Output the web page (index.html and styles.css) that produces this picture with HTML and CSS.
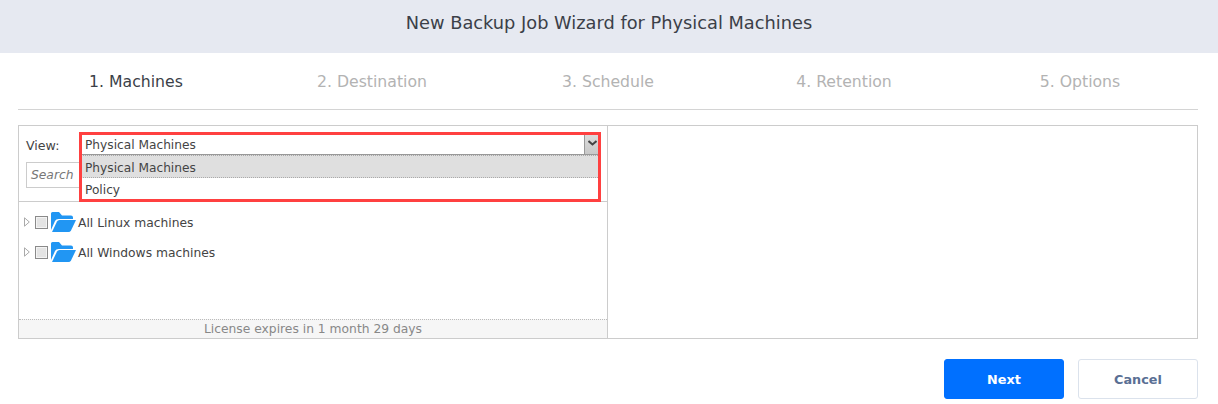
FILE: index.html
```html
<!DOCTYPE html>
<html lang="en">
<head>
<meta charset="utf-8">
<title>New Backup Job Wizard for Physical Machines</title>
<link rel="stylesheet" href="styles.css">
</head>
<body>
<header class="title">New Backup Job Wizard for Physical Machines</header>
<nav class="steps">
  <div class="step active">1. Machines</div>
  <div class="step">2. Destination</div>
  <div class="step">3. Schedule</div>
  <div class="step">4. Retention</div>
  <div class="step">5. Options</div>
</nav>
<main class="panel">
  <section class="left">
    <div class="view-row">
      <span class="view-label">View:</span>
      <div class="select">
        <span class="select-value">Physical Machines</span>
        <span class="select-btn"><svg class="chevron" width="9" height="6" viewBox="0 0 9 6"><path d="M.5 1 4.500 4.500 8.500 1" fill="none" stroke="#444" stroke-width="2"/></svg></span>
      </div>
    </div>
    <div class="search-row"><div class="search">Search</div></div>
    <ul class="tree">
      <li class="node">
        <svg class="arrow" width="6" height="10" viewBox="0 0 6 10"><path d="M.5.8 5.300 5 .5 9.200z" fill="#fff" stroke="#aaa"/></svg>
        <span class="check"></span>
        <svg class="folder" width="25" height="22" viewBox="0 0 25 22"><path d="M0 2.500Q0 1 1.500 1H8l3 3.500h9q2 0 2 2V8H7.500Q5 8 4 10L0 19z" fill="#2196f3"/><path d="M1 21l5-10.500Q6.800 9 8.500 9H25l-5 10.500q-.8 1.500-2.500 1.500z" fill="#2196f3"/></svg>
        <span class="node-label">All Linux machines</span>
      </li>
      <li class="node">
        <svg class="arrow" width="6" height="10" viewBox="0 0 6 10"><path d="M.5.8 5.300 5 .5 9.200z" fill="#fff" stroke="#aaa"/></svg>
        <span class="check"></span>
        <svg class="folder" width="25" height="22" viewBox="0 0 25 22"><path d="M0 2.500Q0 1 1.500 1H8l3 3.500h9q2 0 2 2V8H7.500Q5 8 4 10L0 19z" fill="#2196f3"/><path d="M1 21l5-10.500Q6.800 9 8.500 9H25l-5 10.500q-.8 1.500-2.500 1.500z" fill="#2196f3"/></svg>
        <span class="node-label">All Windows machines</span>
      </li>
    </ul>
    <div class="license">License expires in 1 month 29 days</div>
    <ul class="dropdown">
      <li class="option selected">Physical Machines</li>
      <li class="option">Policy</li>
    </ul>
    <div class="highlight"></div>
  </section>
  <section class="right"></section>
</main>
<footer class="actions">
  <button class="btn primary">Next</button>
  <button class="btn secondary">Cancel</button>
</footer>
</body>
</html>
```

FILE: styles.css
```css
* { box-sizing: border-box; }
html, body { margin: 0; padding: 0; }
body {
  width: 1218px;
  height: 404px;
  overflow: hidden;
  background: #fff;
  color: #444;
  font-family: "DejaVu Sans", sans-serif;
  font-size: 12.3px;
}
.title {
  height: 53px;
  background: #e6e9f1;
  color: #3b3f48;
  font-size: 17.8px;
  line-height: 45px;
  text-align: center;
}
.steps {
  display: grid;
  grid-template-columns: repeat(5, 236px);
  margin: 0 20px 0 18px;
  height: 57px;
  border-bottom: 1px solid #d4d4d4;
}
.step {
  font-size: 15.7px;
  line-height: 58px;
  text-align: center;
  color: #b3b3b3;
}
.step.active { color: #3b3f48; }
.panel {
  display: flex;
  margin: 15px 20px 0 18px;
  height: 214px;
  border: 1px solid #ccc;
}
.left {
  position: relative;
  width: 589px;
  display: flex;
  flex-direction: column;
  border-right: 1px solid #ccc;
}
.right { flex: 1; }
.view-row {
  display: flex;
  align-items: flex-start;
  height: 36px;
  padding: 7px 7px 0 7px;
}
.view-label { width: 54px; line-height: 25px; font-size: 12.6px; }
.select {
  flex: 1;
  height: 22px;
  display: flex;
  align-items: flex-end;
  justify-content: space-between;
  padding-left: 5px;
  border-bottom: 1px solid #999;
}
.select-value { line-height: 17px; font-size: 12.2px; }
.select-btn {
  width: 16px;
  height: 19px;
  background: linear-gradient(#dcdcdc, #c8c8c8);
  border-left: 1px solid #999;
  display: flex;
  align-items: center;
  justify-content: center;
}
.chevron { margin-bottom: 3px; }
.search-row {
  height: 40px;
  padding: 0 7px;
  border-bottom: 1px solid #ccc;
}
.search {
  height: 26px;
  border: 1px solid #ccc;
  padding-left: 4px;
  line-height: 25px;
  font-style: italic;
  color: #777;
}
.tree {
  flex: 1;
  list-style: none;
  margin: 0;
  padding: 5px 0 0 5px;
}
.node {
  display: flex;
  align-items: center;
  height: 30px;
  gap: 4px;
}
.node-label { margin-left: -1px; line-height: 15px; padding-top: 2px; }
.arrow { margin-right: 1px; }
.check {
  width: 13px;
  height: 13px;
  border: 1px solid #8a8a8a;
  background: #e4e4e4;
  box-shadow: inset 0 0 0 1px #f4f4f4;
}
.folder { margin: 0 -1px 0 -1px; }
.license {
  height: 19px;
  background: #f6f6f6;
  border-top: 1px dotted #bbb;
  color: #888;
  line-height: 18px;
  text-align: center;
}
.dropdown {
  position: absolute;
  left: 62px;
  top: 29px;
  width: 517px;
  margin: 0;
  padding: 0;
  list-style: none;
  background: #fff;
}
.option {
  height: 23px;
  line-height: 25px;
  padding-left: 4px;
  font-size: 12.2px;
}
.option.selected {
  background: #dfdfdf;
  border-top: 1px dotted #aaa;
  border-bottom: 1px dotted #aaa;
}
.highlight {
  position: absolute;
  left: 60px;
  top: 6px;
  width: 522px;
  height: 70px;
  border: 3px solid #ff4040;
  pointer-events: none;
}
.actions {
  display: flex;
  justify-content: flex-end;
  gap: 14px;
  margin: 20px 20px 0 18px;
}
.btn {
  width: 120px;
  height: 40px;
  border-radius: 3px;
  font-family: "DejaVu Sans", sans-serif;
  font-size: 12.8px;
  font-weight: 700;
}
.primary { background: #0070ff; border: 1px solid #0070ff; color: #fff; }
.secondary { background: #fff; border: 1px solid #dbe2ec; color: #5a6f94; }
```
